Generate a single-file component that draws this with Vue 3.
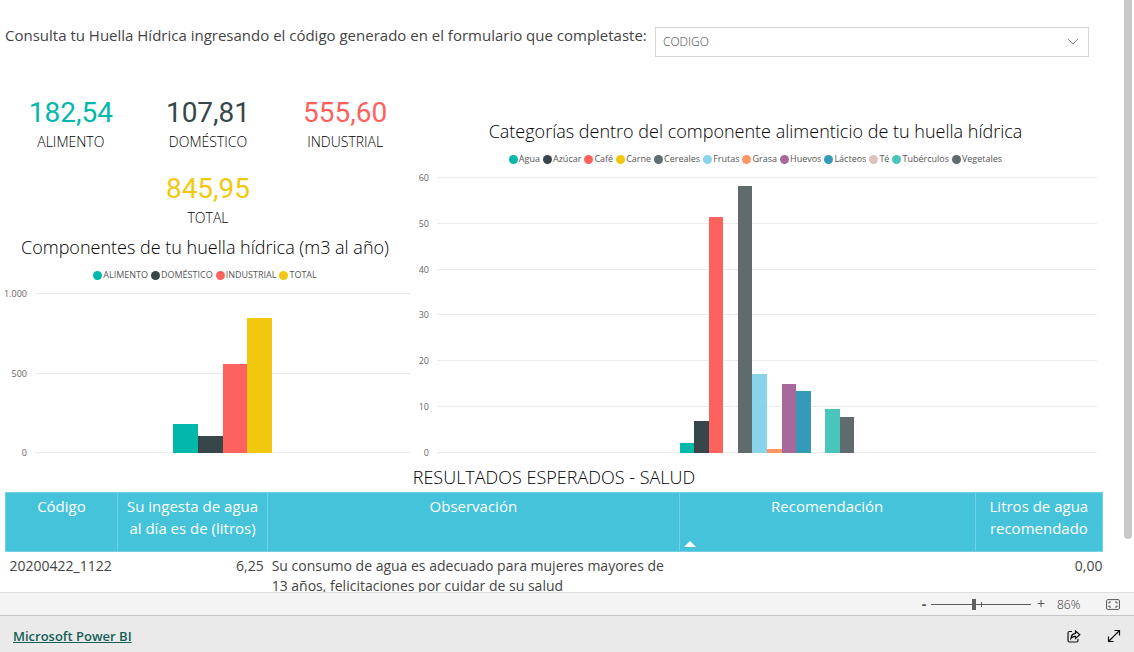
<script setup>
import { ref } from 'vue'

const code = ref('CODIGO')
const zoom = ref(43)

const kpis = [
  { label: 'ALIMENTO', value: '182,54', tone: 'teal' },
  { label: 'DOMÉSTICO', value: '107,81', tone: 'slate' },
  { label: 'INDUSTRIAL', value: '555,60', tone: 'coral' },
  { label: 'TOTAL', value: '845,95', tone: 'gold' },
]

const charts = [
  {
    id: 'components',
    title: 'Componentes de tu huella hídrica (m3 al año)',
    max: 1000,
    ticks: ['1.000', '500', '0'],
    series: [
      { name: 'ALIMENTO', value: 182.54, color: '#01b8aa' },
      { name: 'DOMÉSTICO', value: 107.81, color: '#374649' },
      { name: 'INDUSTRIAL', value: 555.6, color: '#fd625e' },
      { name: 'TOTAL', value: 845.95, color: '#f2c80f' },
    ],
  },
  {
    id: 'categories',
    title: 'Categorías dentro del componente alimenticio de tu huella hídrica',
    max: 60,
    ticks: ['60', '50', '40', '30', '20', '10', '0'],
    series: [
      { name: 'Agua', value: 2.2, color: '#01b8aa' },
      { name: 'Azúcar', value: 7, color: '#374649' },
      { name: 'Café', value: 51.2, color: '#fd625e' },
      { name: 'Carne', value: 0, color: '#f2c80f' },
      { name: 'Cereales', value: 58, color: '#5f6b6d' },
      { name: 'Frutas', value: 17.1, color: '#8ad4eb' },
      { name: 'Grasa', value: 0.9, color: '#fe9666' },
      { name: 'Huevos', value: 14.9, color: '#a66999' },
      { name: 'Lácteos', value: 13.4, color: '#3599b8' },
      { name: 'Té', value: 0, color: '#dfbfbf' },
      { name: 'Tubérculos', value: 9.6, color: '#4ac5bb' },
      { name: 'Vegetales', value: 7.9, color: '#5f6b6d' },
    ],
  },
]
</script>

<template>
  <div class="page">
    <main class="report">
      <div class="canvas">
        <header class="query">
          <label for="code">Consulta tu Huella Hídrica ingresando el código generado en el formulario que completaste:</label>
          <div class="picker">
            <select id="code" v-model="code">
              <option>CODIGO</option>
            </select>
            <svg viewBox="0 0 12 7" aria-hidden="true"><path d="M1 1l5 5 5-5" /></svg>
          </div>
        </header>

        <div class="panels">
          <div class="kpis">
            <div v-for="k in kpis" :key="k.label" class="kpi">
              <div class="number" :class="k.tone">{{ k.value }}</div>
              <div class="caption">{{ k.label }}</div>
            </div>
          </div>
          <section v-for="c in charts" :key="c.id" class="chart" :class="c.id">
            <h2>{{ c.title }}</h2>
            <ul class="legend">
              <li v-for="s in c.series" :key="s.name">
                <i :style="{ background: s.color }"></i>{{ s.name }}
              </li>
            </ul>
            <div class="body">
              <div class="axis"><span v-for="t in c.ticks" :key="t">{{ t }}</span></div>
              <div class="plot">
                <div class="grid"><b v-for="t in c.ticks" :key="t"></b></div>
                <div class="bars">
                  <div
                    v-for="s in c.series"
                    :key="s.name"
                    class="bar"
                    :style="{ height: (s.value / c.max) * 100 + '%', background: s.color }"
                  ></div>
                </div>
              </div>
            </div>
          </section>
        </div>

        <section class="results">
          <h2>RESULTADOS ESPERADOS - SALUD</h2>
          <table>
            <colgroup>
              <col class="c1" /><col class="c2" /><col class="c3" /><col class="c4" /><col class="c5" />
            </colgroup>
            <thead>
              <tr>
                <th>Código</th>
                <th>Su ingesta de agua al día es de (litros)</th>
                <th>Observación</th>
                <th aria-sort="ascending">Recomendación<span class="sort"></span></th>
                <th>Litros de agua recomendado</th>
              </tr>
            </thead>
            <tbody>
              <tr>
                <td>20200422_1122</td>
                <td class="num">6,25</td>
                <td>Su consumo de agua es adecuado para mujeres mayores de 13 años, felicitaciones por cuidar de su salud</td>
                <td></td>
                <td class="num last">0,00</td>
              </tr>
            </tbody>
          </table>
        </section>
      </div>
      <div class="scroll"><div class="thumb"></div></div>
    </main>

    <div class="zoombar">
      <button type="button" class="minus" aria-label="Alejar">-</button>
      <div class="slider">
        <input v-model="zoom" type="range" min="0" max="100" aria-label="Zoom" />
        <i></i>
      </div>
      <button type="button" aria-label="Acercar">+</button>
      <span class="percent">86%</span>
      <button type="button" class="fit" aria-label="Ajustar a la página">
        <svg width="14" height="11" viewBox="0 0 14 11">
          <rect x=".6" y=".6" width="12.8" height="9.8" rx="1.2" />
          <path d="M5 3H3v1.6M9 3h2v1.6M5 8H3V6.4M9 8h2V6.4" />
        </svg>
      </button>
    </div>

    <footer>
      <a href="#">Microsoft Power BI</a>
      <button type="button" aria-label="Compartir">
        <svg width="14" height="13" viewBox="0 0 14 13">
          <path d="M5 1.5H2.5q-1.5 0-1.5 1.5v7.500q0 1.500 1.500 1.500h7q1.500 0 1.500-1.500V9" />
          <path d="M8.500 1l4.300 3.700-4.300 3.700V6.300C6.500 6.200 5 7 4 8.500c.2-3 1.700-5 4.500-5.200z" />
        </svg>
      </button>
      <button type="button" aria-label="Pantalla completa">
        <svg width="14" height="14" viewBox="0 0 14 14">
          <path d="M1.500 12.500l11-11M7.500 1.500h5v5M1.500 7.500v5h5" />
        </svg>
      </button>
    </footer>
  </div>
</template>

<style>
body {
  margin: 0;
}
</style>

<style scoped>
.page {
  display: flex;
  flex-direction: column;
  height: 100vh;
  overflow: hidden;
  background: #fff;
  color: #333;
  font-family: "Open Sans", "Noto Sans", sans-serif;
}
.report {
  flex: 1;
  min-height: 0;
  display: flex;
  overflow: hidden;
}
.canvas {
  flex: 1;
  min-width: 0;
  padding-right: 21px;
}
.scroll {
  width: 10px;
}
.thumb {
  width: 8px;
  height: 91%;
  background: #c8c8c8;
  border-radius: 0 0 4px 4px;
}
.query {
  display: flex;
  justify-content: space-between;
  box-sizing: border-box;
  height: 84px;
  padding: 27px 14px 0 5px;
}
.query label {
  font-size: 15px;
  line-height: 16px;
  font-weight: 400;
  color: #444;
  white-space: nowrap;
}
.picker {
  position: relative;
  width: 434px;
  height: 30px;
}
.picker select {
  appearance: none;
  box-sizing: border-box;
  width: 100%;
  height: 100%;
  padding: 0 7px 1px;
  border: 1px solid #d6d6d6;
  border-radius: 0;
  background: #fff;
  color: #444;
  font: 300 12px "Open Sans", sans-serif;
}
.picker svg {
  position: absolute;
  right: 10px;
  top: 11px;
  width: 12px;
  height: 7px;
  fill: none;
  stroke: #888;
  pointer-events: none;
}
.panels {
  display: grid;
  grid-template-columns: 414fr 689fr;
  grid-template-rows: 151px 227px;
}
.kpis {
  display: flex;
  flex-wrap: wrap;
  justify-content: center;
  align-content: flex-start;
  row-gap: 22px;
  padding: 14px 0 0 2px;
}
.kpi {
  width: 33.3%;
  text-align: center;
}
.number {
  font: 400 28px/30px Roboto, sans-serif;
}
.caption {
  margin-top: 4px;
  font-size: 14px;
  line-height: 20px;
  font-weight: 300;
  color: #000;
}
.teal { color: #01b8aa; }
.slate { color: #374649; }
.coral { color: #fd625e; }
.gold { color: #f2c80f; }
h2 {
  margin: 0;
  font-size: 18px;
  line-height: 24px;
  font-weight: 300;
  color: #000;
  text-align: center;
  white-space: nowrap;
}
.components {
  grid-row: 2;
  padding-right: 4px;
}
.categories {
  grid-column: 2;
  grid-row: 1 / 3;
  padding: 35px 6px 0 0;
}
.legend {
  display: flex;
  justify-content: center;
  gap: 3px;
  margin: 8px 0 10px;
  padding: 0;
  list-style: none;
  font-size: 9px;
  line-height: 16px;
  color: #555;
  white-space: nowrap;
}
.legend li {
  display: flex;
  align-items: center;
  gap: 1px;
}
.legend i {
  width: 9px;
  height: 9px;
  border-radius: 50%;
}
.body {
  display: flex;
  gap: 8px;
  height: 160px;
}
.categories .body {
  height: 276px;
}
.axis {
  display: flex;
  flex-direction: column;
  justify-content: space-between;
  width: 27px;
  margin: -6px 0;
  font-size: 9px;
  line-height: 13px;
  text-align: right;
  color: #666;
}
.categories .axis {
  width: 15px;
}
.plot {
  position: relative;
  flex: 1;
}
.grid {
  display: flex;
  flex-direction: column;
  justify-content: space-between;
  height: 100%;
}
.grid b {
  height: 1px;
  background: #ebebeb;
}
.bars {
  position: absolute;
  inset: 0;
  display: flex;
  align-items: flex-end;
  justify-content: center;
}
.bar {
  width: 6.6%;
}
.categories .bar {
  width: 2.2%;
}
.results {
  padding-left: 5px;
}
.results h2 {
  line-height: 30px;
}
table {
  width: 100%;
  table-layout: fixed;
  border-collapse: collapse;
  font-size: 14px;
}
.c1 { width: 10.2%; }
.c2 { width: 13.7%; }
.c3 { width: 37.5%; }
.c4 { width: 27%; }
.c5 { width: 11.6%; }
th {
  position: relative;
  box-sizing: border-box;
  height: 59px;
  padding: 2px 4px;
  vertical-align: top;
  border: 1px solid #6fd1e3;
  background: #45c3db;
  color: #fff;
  font-size: 15px;
  line-height: 22px;
  font-weight: 400;
}
.sort {
  position: absolute;
  left: 4px;
  bottom: 4px;
  border: 6px solid transparent;
  border-top: 0;
  border-bottom-color: #fff;
}
td {
  padding: 4px;
  line-height: 20px;
  font-weight: 400;
  color: #444;
  vertical-align: top;
}
.num {
  text-align: right;
}
.last {
  padding-right: 0;
}
.zoombar {
  display: flex;
  align-items: center;
  box-sizing: border-box;
  height: 23px;
  padding-right: 14px;
  justify-content: flex-end;
  border-top: 1px solid #dedede;
  background: #f4f4f4;
  color: #555;
  font-size: 12px;
}
button {
  display: flex;
  align-items: center;
  justify-content: center;
  padding: 0;
  border: 0;
  background: none;
  color: inherit;
  font: 400 14px/16px "Open Sans", sans-serif;
}
.zoombar button {
  width: 14px;
}
.zoombar .minus {
  width: 8px;
  font-weight: 700;
}
.slider {
  position: relative;
  display: flex;
  align-items: center;
  width: 100px;
  height: 16px;
  margin: 0 3px;
}
.slider input {
  appearance: none;
  width: 100%;
  height: 1px;
  margin: 0;
  background: #605e5c;
}
.slider input::-webkit-slider-thumb {
  appearance: none;
  width: 4px;
  height: 11px;
  border-radius: 0;
  background: #605e5c;
}
.slider i {
  position: absolute;
  left: 50%;
  top: 6px;
  width: 1px;
  height: 5px;
  background: #605e5c;
}
.percent {
  width: 26px;
  margin: 0 23px 0 9px;
  font-weight: 300;
  color: #333;
}
.fit svg {
  fill: none;
  stroke: #555;
}
footer {
  display: flex;
  align-items: center;
  box-sizing: border-box;
  height: 37px;
  padding: 4px 13px 0;
  gap: 26px;
  border-top: 1px solid #c6c6c6;
  background: #eaeaea;
  color: #111;
}
footer a {
  margin-right: auto;
  color: #135f57;
  font-size: 13px;
  font-weight: 600;
}
footer svg {
  fill: none;
  stroke: currentColor;
  stroke-width: 1.2;
}
</style>
